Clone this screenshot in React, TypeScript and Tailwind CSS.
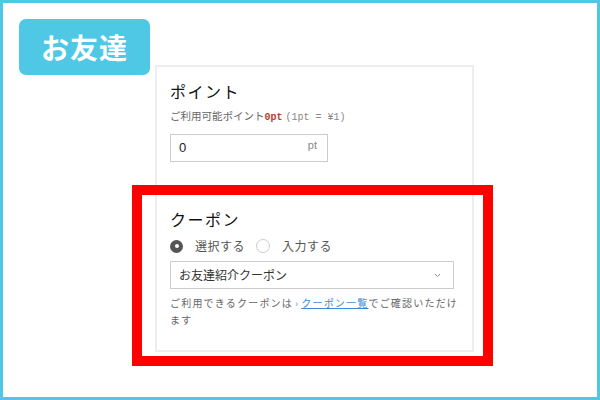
const jp = { fontFamily: '"Noto Sans CJK JP", "Noto Sans", sans-serif' };
const mono = { fontFamily: '"Liberation Mono", "DejaVu Sans Mono", monospace' };

function Radio({ checked, label }: { checked?: boolean; label: string }) {
  return (
    <label className="flex items-center gap-[12px]">
      {checked ? (
        <span className="flex h-[13px] w-[13px] items-center justify-center rounded-full bg-[#555]">
          <span className="h-[4px] w-[4px] rounded-full bg-white" />
        </span>
      ) : (
        <span className="h-[14px] w-[14px] rounded-full border border-[#ccc] bg-white" />
      )}
      <span className="text-[12px] tracking-[0.5px] text-[#555]">{label}</span>
    </label>
  );
}

export default function App() {
  return (
    <div
      className="relative h-[400px] w-[600px] overflow-hidden border-[3px] border-[#4ec8e5] bg-white"
      style={jp}
    >
      <div className="absolute left-[16px] top-[16px] flex h-[56px] w-[131px] items-center justify-center rounded-[7px] bg-[#4ec8e5]">
        <span className="text-[28px] font-bold tracking-[1px] text-white">お友達</span>
      </div>

      <div className="ml-[152px] mt-[62px] h-[287px] w-[319px] border-2 border-[#eee] pl-[13px] pr-[10px] pt-[12px]">
        <h3 className="text-[16px] leading-[24px] tracking-[1.5px] text-[#111]">ポイント</h3>
        <p className="mt-[5px] flex items-baseline text-[10.5px] leading-[16px] text-[#666]">
          ご利用可能ポイント
          <span className="text-[10px] font-bold text-[#c8372d]" style={mono}>
            0pt
          </span>
          <span className="ml-[3px] text-[10px] text-[#888]" style={mono}>
            (1pt = ¥1)
          </span>
        </p>
        <div className="mt-[8px] flex h-[28px] w-[158px] items-center justify-between border border-[#ccc] pl-[8px] pr-[10px]">
          <span className="text-[13px] text-[#222]" style={{ fontFamily: '"Liberation Sans", sans-serif' }}>0</span>
          <span className="-mt-[5px] text-[11px] text-[#888]" style={{ fontFamily: '"Liberation Sans", sans-serif' }}>pt</span>
        </div>

        <h3 className="mt-[45px] text-[16px] leading-[24px] tracking-[1.5px] text-[#111]">クーポン</h3>
        <div className="mt-[6px] flex items-center gap-[11px]">
          <Radio checked label="選択する" />
          <Radio label="入力する" />
        </div>
        <div className="mt-[6px] flex h-[28px] w-[284px] items-center justify-between border border-[#ccc] pl-[8px] pr-[12px]">
          <span className="text-[12px] text-[#333]">お友達紹介クーポン</span>
          <svg width="7" height="5" viewBox="0 0 7 5" fill="none">
            <path d="M1 1l2.5 2.5L6 1" stroke="#888" strokeWidth="1" />
          </svg>
        </div>
        <p className="mt-[5px] text-[10px] leading-[17px] tracking-[1.2px] text-[#666]">
          ご利用できるクーポンは
          <span className="mx-[2px] text-[#5aa7e6]">›</span>
          <a className="text-[#3b8ad9] underline">クーポン一覧</a>
          でご確認いただけます
        </p>
      </div>

      <div className="absolute left-[129px] top-[182px] h-[181px] w-[361px] border-[10px] border-[#ff0000]" />
    </div>
  );
}
